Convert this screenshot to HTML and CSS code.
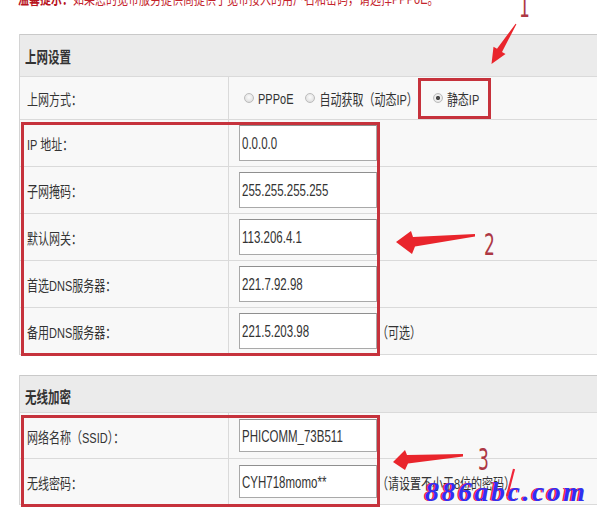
FILE: index.html
```html
<!DOCTYPE html>
<html lang="zh-CN">
<head>
<meta charset="utf-8">
<title>上网设置</title>
<link rel="stylesheet" href="styles.css">
</head>
<body>
<div class="page">
  <p class="notice"><span class="t"><b>温馨提示：</b>如果您的宽带服务提供商提供了宽带接入的用户名和密码，请选择PPPoE。</span></p>

  <section class="panel panel-net">
    <div class="panel-head"><span class="t">上网设置</span></div>
    <div class="row row-mode">
      <div class="label"><span class="t">上网方式：</span></div>
      <div class="value value-mode">
        <label class="opt opt-gap"><span class="radio"></span><span class="t">PPPoE</span></label>
        <label class="opt"><span class="radio"></span><span class="t">自动获取（动态IP）</span></label>
        <label class="opt opt-marked"><span class="radio checked"></span><span class="t">静态IP</span></label>
      </div>
    </div>
    <div class="group">
      <div class="row">
        <div class="label"><span class="t">IP 地址：</span></div>
        <div class="value"><div class="field"><span class="t">0.0.0.0</span></div></div>
      </div>
      <div class="row">
        <div class="label"><span class="t">子网掩码：</span></div>
        <div class="value"><div class="field"><span class="t">255.255.255.255</span></div></div>
      </div>
      <div class="row">
        <div class="label"><span class="t">默认网关：</span></div>
        <div class="value"><div class="field"><span class="t">113.206.4.1</span></div></div>
      </div>
      <div class="row">
        <div class="label"><span class="t">首选DNS服务器：</span></div>
        <div class="value"><div class="field"><span class="t">221.7.92.98</span></div></div>
      </div>
      <div class="row">
        <div class="label"><span class="t">备用DNS服务器：</span></div>
        <div class="value"><div class="field"><span class="t">221.5.203.98</span></div><span class="hint t">（可选）</span></div>
      </div>
    </div>
  </section>

  <section class="panel panel-wifi">
    <div class="panel-head panel-head-wifi"><span class="t">无线加密</span></div>
    <div class="group group-wifi">
      <div class="row row-wifi">
        <div class="label"><span class="t">网络名称（SSID）：</span></div>
        <div class="value"><div class="field field-wifi"><span class="t">PHICOMM_73B511</span></div></div>
      </div>
      <div class="row row-wifi">
        <div class="label"><span class="t">无线密码：</span></div>
        <div class="value"><div class="field field-wifi"><span class="t">CYH718momo**</span></div><span class="hint t">（请设置不小于8位的密码）</span></div>
      </div>
    </div>
  </section>

  <div class="annotations">
    <svg class="marks" width="597" height="508" viewBox="0 0 597 508">
      <polygon points="516.4,24.3 502,52 505.5,54.1 491.5,64 493.5,46.7 497,48.8 515.6,23.7"/>
      <polygon points="396,242 411,231 413,237 475,234 475,236.5 415,246.5 412,254"/>
      <polygon points="393,462 405,450 407,455 463,454 463,456.5 408,463.5 405,470"/>
    </svg>
    <span class="num num-1">1</span>
    <span class="num num-2">2</span>
    <span class="num num-3">3</span>
    <span class="watermark">886abc.com</span>
    <svg class="marks marks-top" width="597" height="508" viewBox="0 0 597 508">
      <line class="wm-stroke" x1="514" y1="469" x2="507" y2="496"/>
    </svg>
  </div>
</div>
</body>
</html>
```

FILE: styles.css
```css
body {
  margin: 0;
  background: #fff;
}

.page {
  position: relative;
  width: 597px;
  height: 508px;
  overflow: hidden;
  background: #fff;
  font-family: "Liberation Sans", "Noto Sans CJK SC", sans-serif;
  font-size: 11px;
  color: #333;
}

.t {
  display: inline-block;
  transform: scaleY(1.38);
  white-space: nowrap;
}

.notice {
  margin: -12px 0 0 18px;
  height: 20px;
  line-height: 20px;
  color: #c4242c;
  white-space: nowrap;
}

.notice b {
  font-weight: bold;
  color: #b8141e;
}

.panel {
  margin-left: 19px;
  border-left: 1px solid #d4d4d4;
}

.panel-net {
  margin-top: 26px;
}

.panel-wifi {
  margin-top: 20px;
}

.panel-head {
  height: 43px;
  box-sizing: border-box;
  border-top: 1px solid #c9c9c9;
  border-bottom: 1px solid #dadada;
  background: #ebebeb;
  display: flex;
  align-items: center;
  padding-left: 5px;
  font-size: 11.5px;
  font-weight: bold;
  color: #333;
}

.panel-head-wifi {
  height: 38px;
  padding-top: 3px;
}

.row {
  display: grid;
  grid-template-columns: 209px 1fr;
  height: 47px;
  box-sizing: border-box;
  border-bottom: 1px solid #dadada;
  background: #f8f8f8;
}

.row-mode {
  height: 43px;
}

.row-wifi {
  height: 46px;
}

.label {
  display: flex;
  align-items: center;
  padding-left: 7px;
  border-right: 1px solid #dadada;
}

.value {
  display: flex;
  align-items: center;
  padding-left: 10px;
}

.value-mode {
  padding-left: 15px;
}

.opt {
  display: inline-flex;
  align-items: center;
}

.opt-gap {
  margin-right: 12px;
}

.opt-marked {
  height: 41px;
  box-sizing: border-box;
  border: 3px solid #c6323c;
  padding: 0 9px 0 12px;
}

.radio {
  flex: none;
  width: 10px;
  height: 10px;
  box-sizing: border-box;
  border-radius: 50%;
  border: 1px solid #bcbcbc;
  background: radial-gradient(circle at 50% 40%, #fbfbfb 0, #e6e6e6 60%, #d2d2d2 100%);
  margin-right: 4px;
}

.radio.checked {
  background: radial-gradient(circle, #4a4a4a 0, #4a4a4a 1.8px, #f2f2f2 2.4px, #d6d6d6 100%);
}

.field {
  flex: none;
  width: 138px;
  height: 36px;
  box-sizing: border-box;
  border: 1px solid #a9a9a9;
  border-top-color: #8f8f8f;
  background: #fff;
  display: flex;
  align-items: center;
  padding-left: 2px;
  font-size: 11.5px;
  color: #333;
}

.field-wifi {
  height: 33px;
}

.hint {
  color: #333;
}

.group {
  position: relative;
}

.group::after {
  content: "";
  position: absolute;
  left: 1px;
  top: 2px;
  bottom: -1px;
  width: 359px;
  box-sizing: border-box;
  border: 3px solid #c6323c;
}

.group-wifi::after {
  bottom: -2px;
}

.annotations {
  position: absolute;
  inset: 0;
  pointer-events: none;
}

.marks {
  position: absolute;
  left: 0;
  top: 0;
}

.marks polygon {
  fill: #e9252c;
}

.marks .wm-stroke {
  stroke: #f0263a;
  stroke-width: 2.2;
}

.num {
  position: absolute;
  font-family: "DejaVu Sans", sans-serif;
  font-size: 31px;
  line-height: 31px;
  color: #ad3844;
  transform: scaleX(0.55);
  transform-origin: left top;
}

.num-1 {
  left: 519px;
  top: -9px;
}

.num-2 {
  left: 484px;
  top: 229px;
}

.num-3 {
  left: 478px;
  top: 444px;
}

.watermark {
  position: absolute;
  left: 425px;
  top: 478px;
  font-family: "Liberation Serif", serif;
  font-style: italic;
  font-weight: bold;
  font-size: 28px;
  line-height: 28px;
  letter-spacing: 2.5px;
  color: #3030f0;
  text-shadow: -1.5px 0 0 #f2263a;
  white-space: nowrap;
}
```
